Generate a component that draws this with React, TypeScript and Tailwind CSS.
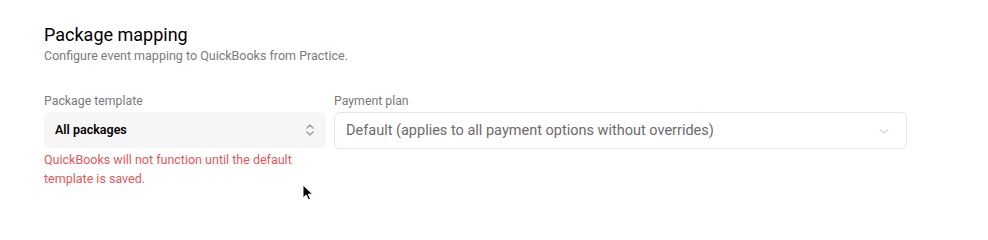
import React from 'react'

const UpDown = () => (
  <svg className="w-3 h-4 text-gray-400" viewBox="0 0 12 16" fill="none" stroke="currentColor" strokeWidth={1.5} strokeLinecap="round" strokeLinejoin="round">
    <path d="M3 6l3-3 3 3" />
    <path d="M3 10l3 3 3-3" />
  </svg>
)

const Chevron = () => (
  <svg className="w-3 h-3 text-gray-300" viewBox="0 0 12 12" fill="none" stroke="currentColor" strokeWidth={1.3} strokeLinecap="round" strokeLinejoin="round">
    <path d="M2 4.5l4 3.5 4-3.5" />
  </svg>
)

const App = () => {
  return (
    <div
      className="relative w-[988px] h-[218px] bg-white px-[44px] pt-[24px]"
      style={{ fontFamily: 'Roboto, "Liberation Sans", sans-serif' }}
    >
      <h2 className="text-[18px] leading-[22px] text-black">Package mapping</h2>
      <p className="mt-[2px] text-[12.5px] leading-[16px] text-[#7a7a7a]">
        Configure event mapping to QuickBooks from Practice.
      </p>

      <div className="mt-[29px] flex gap-[8px]">
        <div className="w-[282px]">
          <label className="block text-[12.3px] leading-[16px] text-[#7a7a7a] mb-[3px]">Package template</label>
          <div className="h-[36px] rounded-[6px] bg-[#f6f6f6] flex items-center justify-between pl-[11px] pr-[10px]">
            <span className="text-[12.5px] font-semibold text-black">All packages</span>
            <UpDown />
          </div>
          <p className="mt-[2px] text-[12.5px] leading-[19px] text-[#e2585c]">
            QuickBooks will not function until the default template is saved.
          </p>
        </div>
        <div className="w-[573px]">
          <label className="block text-[12.3px] leading-[16px] text-[#7a7a7a] mb-[3px]">Payment plan</label>
          <div className="h-[37px] rounded-[6px] border border-[#e6e6e6] bg-white flex items-center justify-between pl-[11px] pr-[16px]">
            <span className="text-[14.5px] text-[#6b6b6b]">Default (applies to all payment options without overrides)</span>
            <Chevron />
          </div>
        </div>
      </div>

      <svg className="absolute left-[302px] top-[184px] w-[12px] h-[18px]" viewBox="0 0 12 18">
        <path d="M1 1v13l3.2-3 2.3 5 2-0.9-2.2-4.9h4.4z" fill="#000" stroke="#fff" strokeWidth={1} />
      </svg>
    </div>
  )
}

export default App
